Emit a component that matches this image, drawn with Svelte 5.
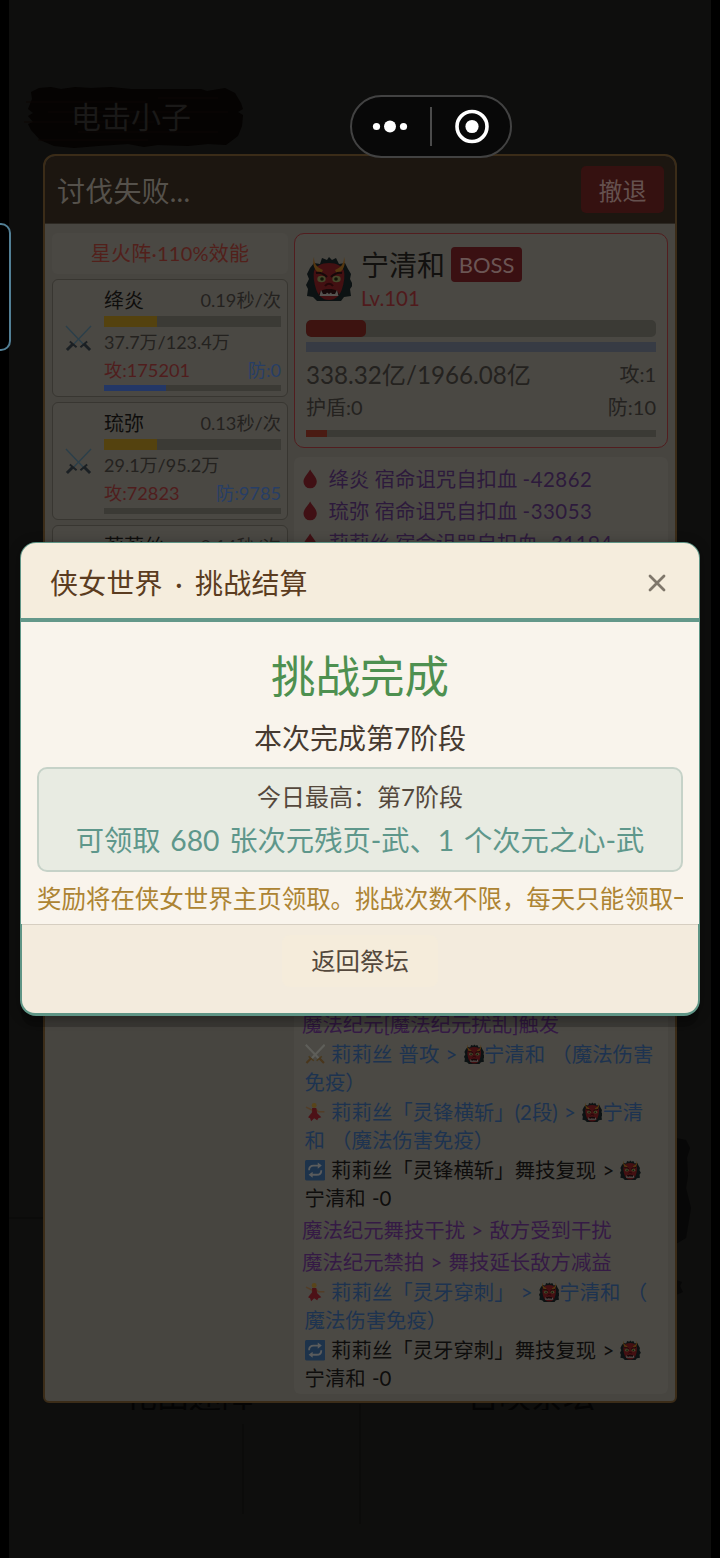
<script>
  let { showResult = true } = $props();

  const allies = [
    { name: "绛炎", speed: "0.19秒/次", hp: "37.7万/123.4万", rate: 30, atk: "175201", def: "0", energy: 35 },
    { name: "琉弥", speed: "0.13秒/次", hp: "29.1万/95.2万", rate: 30, atk: "72823", def: "9785", energy: 0 },
    { name: "莉莉丝", speed: "0.14秒/次" },
  ];

  const curses = [
    { who: "绛炎", lost: "-42862" },
    { who: "琉弥", lost: "-33053" },
    { who: "莉莉丝", lost: "-31194" },
  ];

  // each row is a list of pieces, {icon} or plain text
  const logs = [
    { kind: "magic", rows: [["魔法纪元[魔法纪元扰乱]触发"]] },
    { kind: "hit", rows: [[{ icon: "swords" }, " 莉莉丝 普攻 > ", { icon: "oni" }, "宁清和 （魔法伤害"], ["免疫）"]] },
    { kind: "hit", rows: [[{ icon: "dancer" }, " 莉莉丝「灵锋横斩」(2段) > ", { icon: "oni" }, "宁清"], ["和 （魔法伤害免疫）"]] },
    { kind: "echo", rows: [[{ icon: "repeat" }, " 莉莉丝「灵锋横斩」舞技复现 > ", { icon: "oni" }], ["宁清和 -0"]] },
    { kind: "magic", rows: [["魔法纪元舞技干扰 > 敌方受到干扰"]] },
    { kind: "magic", rows: [["魔法纪元禁拍 > 舞技延长敌方减益"]] },
    { kind: "hit", rows: [[{ icon: "dancer" }, " 莉莉丝「灵牙穿刺」 > ", { icon: "oni" }, "宁清和 （"], ["魔法伤害免疫）"]] },
    { kind: "echo", rows: [[{ icon: "repeat" }, " 莉莉丝「灵牙穿刺」舞技复现 > ", { icon: "oni" }], ["宁清和 -0"]] },
  ];
</script>

{#snippet oni()}
  <svg class="icon" viewBox="0 0 46 46">
    <path d="M4 12 8 7l6 1 2-6 5 2 2-3 3 3 4-2 3 6 6-1 3 6 3 5-1 5 3 6-3 4 1 7-7 1-3 4H11l-4-4-6-1 1-7-2-4 3-6-2-5z" fill="#0c1213" />
    <path d="M8 15c2-5 7-8 15-8s13 3 15 8c1 5 0 12-2 18-2 6-6 11-13 11S12 39 10 33C8 27 7 20 8 15z" fill="#431012" />
    <path d="M8 1c0 6 2 10 9 13l-2 4C8 15 6 8 8 1zM38 1c0 6-2 10-9 13l2 4c7-3 9-10 7-17z" fill="#553710" />
    <path d="M10 17c4-1 8 1 11 4M36 17c-4-1-8 1-11 4" stroke="#16090a" stroke-width="2" fill="none" />
    <ellipse cx="15.500" cy="23" rx="4.200" ry="3.200" fill="#45472a" />
    <ellipse cx="30.500" cy="23" rx="4.200" ry="3.200" fill="#45472a" />
    <circle cx="16" cy="23" r="1.800" fill="#101608" />
    <circle cx="30" cy="23" r="1.800" fill="#101608" />
    <path d="M19 30c2-3 6-3 8 0" stroke="#230709" stroke-width="2" fill="none" />
    <path d="M13 40c0-5 3-7 10-7s10 2 10 7z" fill="#170809" />
    <path d="m13.500 40 1.500-6 2 4h3l1-1.500 2 1.500 2-1.500 1 1.500h3l2-4 1.500 6z" fill="#565350" />
  </svg>
{/snippet}

{#snippet swords(faint)}
  <svg class="icon" viewBox="0 0 28 28">
    <path d="M1 1 20 21M27 1 8 21" stroke={faint ? "#2b3f4a" : "#5e5e59"} stroke-width={faint ? 1.3 : 3} />
    <path d="M16 23l7-6M12 23l-7-6" stroke={faint ? "#1b2024" : "#49391d"} stroke-width="2" />
    <path d="m20 20 6 6M8 20l-6 6" stroke={faint ? "#1b2024" : "#49361c"} stroke-width="3" />
  </svg>
{/snippet}

{#snippet dancer()}
  <svg class="icon" viewBox="0 0 20 20">
    <circle cx="9" cy="3.500" r="2.400" fill="#59451a" />
    <path d="M1 5l6 3 1 3M19 9.500h-6l-3-3" stroke="#523d27" stroke-width="1.500" fill="none" />
    <path d="M7 6h4l1 5 4 4-3 1-1 2-3-2-3 3-1-3-2-1 4-5z" fill="#4d1117" />
  </svg>
{/snippet}

{#snippet repeat()}
  <svg class="icon" viewBox="0 0 20 20">
    <rect width="20" height="20" rx="1.500" fill="#1d334b" />
    <path d="M4 10c0-3 2-4.500 4.500-4.500H14M16 10c0 3-2 4.500-4.500 4.500H6" stroke="#5a5c5d" stroke-width="1.800" fill="none" />
    <path d="m12.500 2.500 4 3-4 3zM7.500 11.500l-4 3 4 3z" fill="#5a5c5d" />
  </svg>
{/snippet}

{#snippet drop()}
  <svg class="icon" viewBox="0 0 20 20">
    <path d="M7 .5c2 4 6.500 7.500 6.500 12a6.500 6.500 0 0 1-13 0C.5 8 5 4.500 7 .5z" fill="#401014" />
  </svg>
{/snippet}

<div class="screen">
  <svg class="scenery" viewBox="0 0 720 1558">
    <path d="M676 1138l10 2 4 8-3 10 1 18-2 12 5 20-4 24-1 6-10 6zM676 1280l6 2-2 4 3 6-7 3z" fill="#070707" />
    <path d="M243 1424v90M360 1404v120M9 1218h34" stroke="#0b0b0a" stroke-width="2" />
  </svg>

  <div class="plaque">
    <svg class="wood" viewBox="0 0 226 62" preserveAspectRatio="none">
      <path d="M13 6l8-4 12-1 10 2 14-2 16 1 20-1 20 2h70l6 2 18-3 10 5 6 10 2 6-5 3 5 3-1 11-4 10-12 9-18-1-20 2-30-1-14 2-16-3-30 2-24 2-20-2-14-6-9-10-3-6 5-2-5-6 5-3-5-4 4-10z" fill="#050302" />
      <path d="M8 16h120M30 26h180M6 36h130M60 46h140M20 54h110M140 12h60" stroke="#0c0704" stroke-width="1" />
    </svg>
    <span>电击小子</span>
  </div>

  <section class="battle">
    <header class="battle-head">
      <h2>讨伐失败...</h2>
      <button class="retreat">撤退</button>
    </header>

    <div class="battle-body">
      <div class="team">
        <div class="formation">星火阵·110%效能</div>
        {#each allies as ally}
          <div class="ally">
            <div class="ally-icon">{@render swords(true)}</div>
            <div class="ally-info">
              <div class="line name"><b>{ally.name}</b><span>{ally.speed}</span></div>
              {#if ally.hp}
                <div class="bar hp"><i style="width: {ally.rate}%"></i></div>
                <div class="line num">{ally.hp}</div>
                <div class="line stat"><span class="atk">攻:{ally.atk}</span><span class="def">防:{ally.def}</span></div>
                <div class="bar energy"><i style="width: {ally.energy}%"></i></div>
              {/if}
            </div>
          </div>
        {/each}
      </div>

      <div class="enemy">
        <div class="boss">
          <div class="boss-top">
            <div class="boss-face">{@render oni()}</div>
            <div>
              <div class="boss-name">宁清和<em>BOSS</em></div>
              <div class="boss-level">Lv.101</div>
            </div>
          </div>
          <div class="bar boss-hp"><i style="width: 17.200%"></i></div>
          <div class="bar boss-shield"></div>
          <div class="boss-row big"><span class="total">338.32亿/1966.08亿</span><span>攻:1</span></div>
          <div class="boss-row"><span>护盾:0</span><span>防:10</span></div>
          <div class="bar boss-energy"><i style="width: 6%"></i></div>
        </div>

        <div class="log">
          <div>
            {#each curses as c}
              <div class="curse">{@render drop()} {c.who} 宿命诅咒自扣血 <span class="lost">{c.lost}</span></div>
            {/each}
          </div>
          <div>
            {#each logs as entry}
              <div class="entry {entry.kind}">
                {#each entry.rows as row}
                  <div class="row">{#each row as part}{#if part.icon === "oni"}{@render oni()}{:else if part.icon === "swords"}{@render swords(false)}{:else if part.icon === "dancer"}{@render dancer()}{:else if part.icon === "repeat"}{@render repeat()}{:else}{part}{/if}{/each}</div>
                {/each}
              </div>
            {/each}
          </div>
        </div>
      </div>
    </div>
  </section>

  <div class="places"><span>花田迷阵</span><span>召唤祭坛</span></div>

  <div class="side-tab"></div>

  {#if showResult}
    <div class="modal">
      <header class="modal-head">
        <h1>侠女世界 · 挑战结算</h1>
        <button class="close" aria-label="关闭">
          <svg viewBox="0 0 18 18"><path d="M2 2l14 14M16 2 2 16" /></svg>
        </button>
      </header>
      <div class="modal-body">
        <div class="result">挑战完成</div>
        <div class="stage">本次完成第7阶段</div>
        <div class="reward">
          <div class="best">今日最高：第7阶段</div>
          <div class="items">可领取 680 张次元残页-武、1 个次元之心-武</div>
        </div>
        <div class="tip">奖励将在侠女世界主页领取。挑战次数不限，每天只能领取一</div>
      </div>
      <footer class="modal-foot">
        <button class="back">返回祭坛</button>
      </footer>
    </div>
  {/if}

  <div class="capsule">
    <svg viewBox="0 0 162 64">
      <circle cx="26.500" cy="31.500" r="3.600" /><circle cx="40" cy="31.500" r="6" /><circle cx="53.500" cy="31.500" r="3.600" />
      <path d="M81 12v39" stroke="#4b4b4b" stroke-width="2" />
      <circle cx="122" cy="31.500" r="15" fill="none" stroke="#fff" stroke-width="3.600" />
      <circle cx="122" cy="31.500" r="6.600" />
    </svg>
  </div>
</div>

<style>
  :global(body) {
    background: #000;
  }

  .screen {
    position: relative;
    box-sizing: border-box;
    width: 720px;
    height: 1558px;
    padding: 86px 43px 0;
    overflow: hidden;
    background: linear-gradient(90deg, #000 9px, #0e0e0d 9px, #0e0e0d 711px, #000 711px);
    font-family: Lato, "Noto Sans CJK SC", sans-serif;
    color: #24221f;
    white-space: nowrap;
  }

  .screen * {
    box-sizing: border-box;
  }

  h1, h2 {
    margin: 0;
    font-weight: 400;
  }

  button {
    border: none;
    padding: 0;
    font-family: inherit;
  }

  .scenery {
    position: absolute;
    left: 0;
    top: 0;
    width: 720px;
    height: 1558px;
  }

  .plaque {
    position: relative;
    width: 226px;
    height: 62px;
    margin: 0 0 6px -25px;
    line-height: 60px;
    font-size: 30px;
    text-align: center;
    color: #1a1918;
  }

  .plaque span {
    position: relative;
  }

  .wood {
    position: absolute;
    left: 0;
    top: 0;
    width: 100%;
    height: 100%;
  }

  .battle {
    position: relative;
    width: 634px;
    height: 1249px;
    border: 2px solid #3b2c18;
    border-radius: 12px 12px 6px 6px;
    background: #474540;
    overflow: hidden;
  }

  .battle-head {
    display: flex;
    align-items: center;
    justify-content: space-between;
    height: 68px;
    padding: 0 11px 0 12px;
    background: #1c1610;
    border-bottom: 1px solid #2c2822;
  }

  .battle-head h2 {
    font-size: 28px;
    letter-spacing: 0.200px;
    color: #55514b;
  }

  .retreat {
    width: 83px;
    height: 47px;
    border-radius: 5px;
    background: #351110;
    font-size: 24px;
    color: #65514f;
  }

  .battle-body {
    display: flex;
    gap: 6px;
    padding: 9px 7px 7px;
    height: 1177px;
  }

  .team {
    display: flex;
    flex-direction: column;
    gap: 5px;
    width: 236px;
  }

  .formation {
    height: 41px;
    border-radius: 5px;
    background: #4a4843;
    font-size: 20px;
    letter-spacing: 0.250px;
    line-height: 41px;
    text-align: center;
    color: #52201b;
  }

  .ally {
    display: flex;
    height: 118px;
    padding: 7px 6px 0 12px;
    border: 1px solid #383631;
    border-radius: 6px;
    background: #4a4843;
  }

  .ally-icon {
    width: 39px;
    padding-top: 38px;
    font-size: 27px;
    line-height: 0;
  }

  .ally-info {
    flex: 1;
  }

  .line {
    display: flex;
    justify-content: space-between;
    line-height: 28px;
    font-size: 18.200px;
  }

  .line b {
    font-size: 20px;
    font-weight: 400;
    color: #0e0d0c;
  }

  .line.name {
    height: 29px;
    line-height: 26px;
  }

  .line.num {
    height: 29px;
    line-height: 30px;
    font-size: 18px;
  }

  .atk {
    color: #501d1d;
  }

  .def {
    color: #273e66;
  }

  .bar {
    background: #3b3a35;
    overflow: hidden;
  }

  .bar i {
    display: block;
    height: 100%;
  }

  .hp {
    height: 11px;
  }

  .hp i {
    background: #54420f;
  }

  .energy {
    height: 6px;
    margin-top: 1px;
  }

  .energy i {
    background: #233766;
  }

  .enemy {
    display: flex;
    flex-direction: column;
    gap: 9px;
    width: 374px;
  }

  .boss {
    height: 215px;
    padding: 11px 11px 0;
    border: 1px solid #521d1f;
    border-radius: 10px;
    background: #4a4843;
  }

  .boss-top {
    display: flex;
    gap: 9px;
    height: 75px;
  }

  .boss-face {
    padding-top: 11px;
    font-size: 46px;
    line-height: 0;
  }

  .boss-name {
    display: flex;
    align-items: center;
    gap: 6px;
    height: 39px;
    font-size: 28px;
    line-height: 36px;
    color: #12110f;
  }

  .boss-name em {
    width: 71px;
    height: 35px;
    border-radius: 4px;
    background: #3a1012;
    font-size: 22px;
    font-style: normal;
    line-height: 35px;
    text-align: center;
    color: #6b5554;
  }

  .boss-level {
    font-size: 20.400px;
    line-height: 29px;
    color: #501a1c;
  }

  .boss-hp {
    height: 17px;
    border-radius: 5px;
  }

  .boss-hp i {
    border-radius: 5px;
    background: #3d1310;
  }

  .boss-shield {
    height: 10px;
    margin: 5px 0 4px;
    background: #373b44;
  }

  .boss-row {
    display: flex;
    align-items: center;
    justify-content: space-between;
    height: 31px;
    font-size: 20px;
  }

  .boss-row.big {
    height: 35px;
  }

  .total {
    font-size: 24.200px;
  }

  .boss-energy {
    height: 7px;
    margin-top: 8px;
  }

  .boss-energy i {
    background: #4a1b13;
  }

  .log {
    flex: 1;
    display: flex;
    flex-direction: column;
    justify-content: space-between;
    padding: 9px 8px 0;
    border-radius: 6px;
    background: #4b4944;
    font-size: 20.400px;
    line-height: 27.500px;
    word-spacing: 1px;
  }

  .curse {
    height: 32px;
    padding-left: 1px;
    word-spacing: 0;
    color: #2d1a3c;
  }

  .lost {
    letter-spacing: 0.500px;
  }

  .icon {
    display: inline-block;
    width: 1em;
    height: 1em;
    vertical-align: -0.140em;
  }

  .ally-icon .icon, .boss-face .icon {
    vertical-align: top;
  }

  .entry {
    padding: 0 0 3px 2.500px;
  }

  .entry.magic {
    padding: 2px 0 2.500px 0;
    color: #351a45;
  }

  .entry.hit {
    color: #1d3350;
  }

  .entry.echo {
    color: #0e0d0c;
  }

  .entry:last-child {
    padding-bottom: 2px;
  }

  .row {
    height: 27.500px;
  }

  /* only the lower edge of the map labels shows under the battle panel */
  .places {
    display: flex;
    gap: 214px;
    height: 7px;
    padding-left: 82px;
    overflow: hidden;
    font-size: 32px;
    line-height: 8px;
    color: #040404;
  }

  .places span {
    margin-top: -11px;
  }

  .side-tab {
    position: absolute;
    left: -12px;
    top: 223px;
    width: 23px;
    height: 128px;
    border: 2px solid #527f95;
    border-radius: 10px;
    background: #000;
  }

  .modal {
    position: absolute;
    left: 20px;
    top: 542px;
    width: 680px;
    height: 474px;
    display: flex;
    flex-direction: column;
    border-radius: 16px;
    background: #5f9586;
    padding: 1px 1px 3px;
    box-shadow: 0 12px 0 -1px rgba(0, 0, 0, 0.2), 0 2px 12px rgba(0, 0, 0, 0.35);
  }

  .modal-head {
    display: flex;
    align-items: center;
    justify-content: space-between;
    height: 79px;
    padding: 2px 33px 0 29px;
    border-bottom: 4px solid #64988a;
    border-radius: 15px 15px 0 0;
    background: #f5eddd;
  }

  .modal-head h1 {
    font-size: 28px;
    letter-spacing: 0.200px;
    word-spacing: 5px;
    color: #5b3c20;
  }

  .close {
    width: 18px;
    height: 18px;
    margin-top: 2px;
    background: none;
    line-height: 0;
  }

  .close path {
    stroke: #7f776b;
    stroke-width: 2.800;
    stroke-linecap: round;
  }

  .modal-body {
    height: 302px;
    padding: 24px 16px 0;
    background: #f9f4ec;
    text-align: center;
  }

  .result {
    font-size: 44.500px;
    line-height: 60px;
    color: #4e9050;
  }

  .stage {
    font-size: 28px;
    line-height: 40px;
    margin: 12px 0 9px;
    color: #463a30;
  }

  .reward {
    height: 105px;
    padding-top: 11px;
    border: 2px solid #c6d2c8;
    border-radius: 10px;
    background: #e8ebe2;
  }

  .best {
    font-size: 24px;
    line-height: 34px;
    color: #54483c;
  }

  .items {
    font-size: 28.300px;
    line-height: 53px;
    word-spacing: 2.500px;
    color: #5e978b;
  }

  .tip {
    width: 646px;
    overflow: hidden;
    text-align: left;
    font-size: 24.480px;
    line-height: 53px;
    color: #ad8433;
  }

  .modal-foot {
    flex: 1;
    padding-top: 10px;
    border-top: 1px solid #d6cec1;
    margin: 0 1px;
    border-radius: 0 0 13px 13px;
    background: #f3ebdd;
    text-align: center;
  }

  .back {
    width: 156px;
    height: 52px;
    padding-bottom: 3px;
    border-radius: 8px;
    background: #f5ecdb;
    font-size: 24.400px;
    color: #54483c;
  }

  .capsule {
    position: absolute;
    left: 350px;
    top: 95px;
    width: 162px;
    height: 63px;
    border: 2px solid #424242;
    border-radius: 32px;
    background: #080808;
  }

  .capsule svg {
    display: block;
    margin: -2px;
    width: 162px;
    fill: #fff;
  }
</style>
